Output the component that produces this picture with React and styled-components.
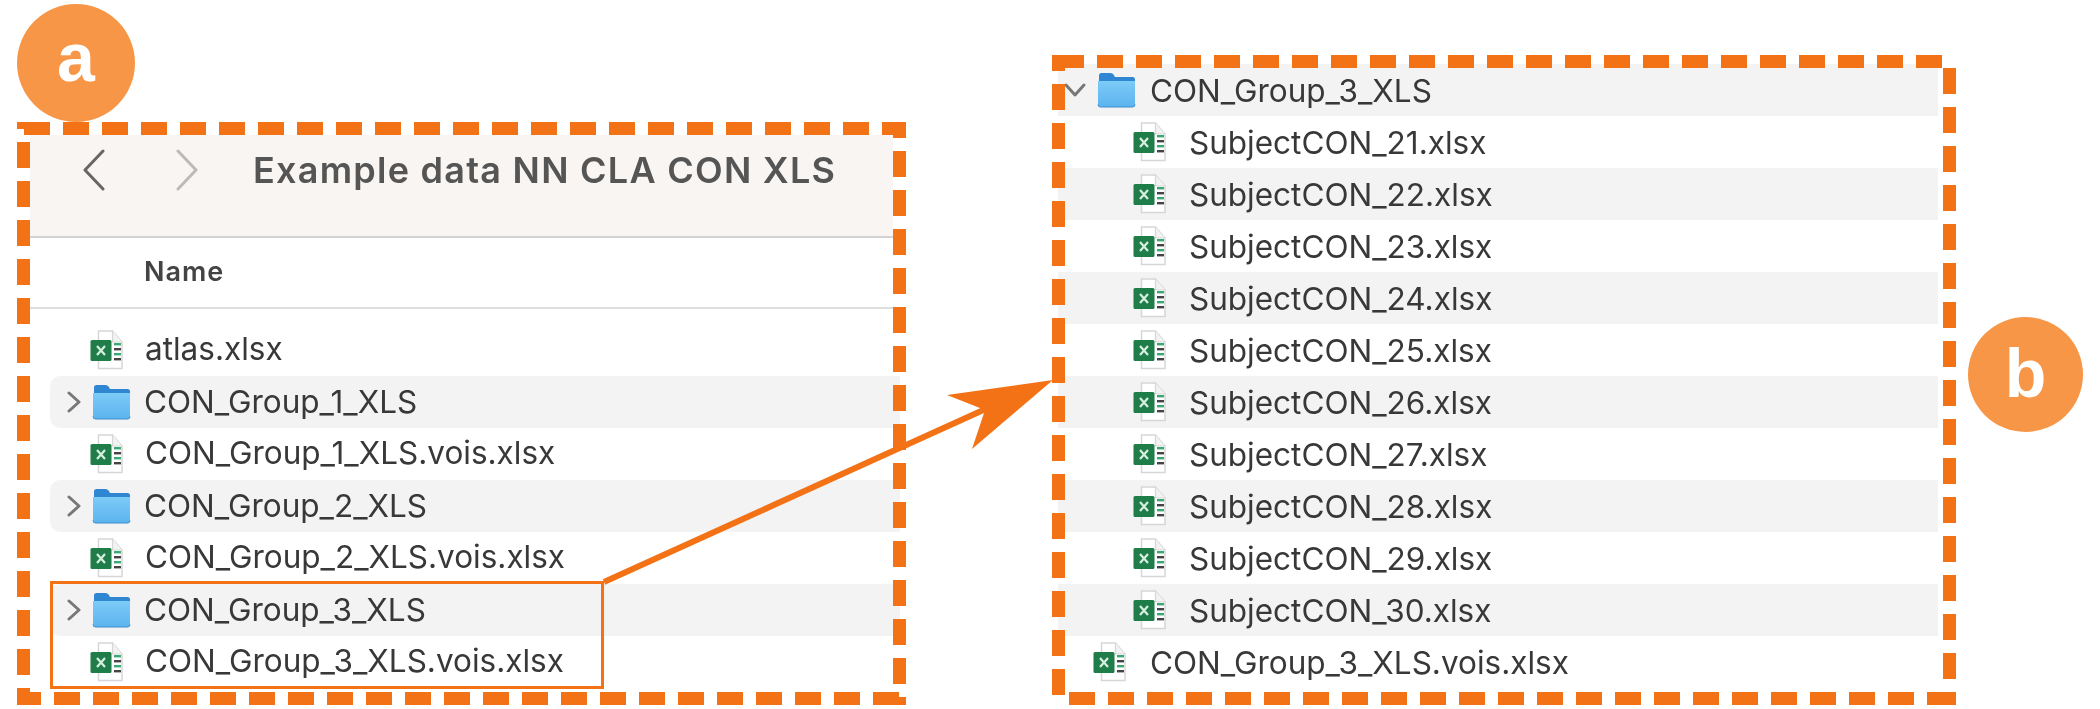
import React from "react";
import styled, { createGlobalStyle } from "styled-components";

const ORANGE = "#f47216";

const Global = createGlobalStyle`
  html, body { margin: 0; padding: 0; background: #fff; }
  body { font-family: "Inter", "Liberation Sans", sans-serif; }
`;

const Page = styled.div`
  position: relative;
  width: 2100px;
  height: 709px;
  overflow: hidden;
  display: flex;
  background: #fff;
`;

const LeftColumn = styled.section`
  margin-left: 17px;
  padding-top: 4px;
  width: 889px;
`;

const RightGroup = styled.section`
  margin-left: 146px;
  padding-top: 55px;
  display: flex;
  align-items: flex-start;
  gap: 12px;
`;

const Badge = styled.div`
  width: ${(p) => p.$size}px;
  height: ${(p) => p.$size}px;
  box-sizing: border-box;
  margin-top: ${(p) => p.$top || 0}px;
  padding-bottom: ${(p) => p.$lift}px;
  border-radius: 50%;
  background: #f79646;
  color: #fff;
  font-family: "Liberation Sans", sans-serif;
  font-weight: 700;
  font-size: 68px;
  display: flex;
  align-items: center;
  justify-content: center;
  filter: blur(0.3px);
`;

const DashedPanel = styled.div`
  position: relative;
  width: ${(p) => p.$width}px;
  height: ${(p) => p.$height}px;
  box-sizing: border-box;
  padding: ${(p) => p.$pad};
  &::after {
    content: "";
    position: absolute;
    inset: 0;
    pointer-events: none;
    background:
      ${(p) =>
        p.$trim
          ? "linear-gradient(#fff, #fff) 100% 0 / 1px 13px no-repeat, linear-gradient(#fff, #fff) 0 100% / 4px 10px no-repeat,"
          : ""}
      linear-gradient(90deg, ${ORANGE} 26px, transparent 0) ${(p) => p.$tx}px 0 / 39px 13px repeat-x,
      linear-gradient(90deg, ${ORANGE} 26px, transparent 0) ${(p) => p.$bx}px 100% / 39px 13px repeat-x,
      linear-gradient(180deg, ${ORANGE} 26px, transparent 0) 0 ${(p) => p.$ly}px / 13px 39px repeat-y,
      linear-gradient(180deg, ${ORANGE} 26px, transparent 0) 100% ${(p) => p.$ry}px / 13px 39px repeat-y;
  }
`;

const TitleBar = styled.header`
  height: 103px;
  box-sizing: border-box;
  margin-right: 7px;
  background: #f9f5f2;
  border-bottom: 2px solid #d5d3d1;
  display: flex;
  align-items: flex-start;
  padding: 14px 0 0 52px;
`;

const NavButton = styled.svg`
  width: 24px;
  height: 42px;
  margin-right: ${(p) => p.$gap}px;
  fill: none;
  stroke: ${(p) => p.$color};
  stroke-width: 3;
  stroke-linecap: round;
  stroke-linejoin: round;
`;

const Title = styled.h1`
  margin: 0;
  font-size: 36px;
  line-height: 42px;
  font-weight: 600;
  letter-spacing: 1.25px;
  color: #555;
  white-space: nowrap;
  filter: blur(0.6px);
`;

const ColumnHeader = styled.div`
  height: 71px;
  box-sizing: border-box;
  margin-right: 7px;
  border-bottom: 2px solid #dededd;
  padding-left: 114px;
  font-size: 27px;
  letter-spacing: 1px;
  line-height: 68px;
  font-weight: 600;
  color: #444;
  filter: blur(0.5px);
`;

const List = styled.div`
  padding-top: ${(p) => p.$top || 0}px;
`;

const Row = styled.div`
  height: 52px;
  box-sizing: border-box;
  display: flex;
  align-items: center;
  padding-left: ${(p) => p.$indent}px;
  margin-left: ${(p) => p.$inset || 0}px;
  background: ${(p) => (p.$shade ? "#f3f3f3" : "transparent")};
  border-radius: ${(p) => p.$radius || 0}px 0 0 ${(p) => p.$radius || 0}px;
`;

const Label = styled.span`
  font-size: 31.5px;
  color: #383838;
  white-space: nowrap;
  padding-bottom: ${(p) => p.$raise || 0}px;
  filter: blur(0.6px);
`;

const IconSlot = styled.svg`
  flex: none;
  width: ${(p) => p.$w}px;
  height: ${(p) => p.$h}px;
  margin-right: ${(p) => p.$gap}px;
  filter: blur(0.4px);
`;

const Twist = styled.svg`
  flex: none;
  width: ${(p) => p.$w}px;
  height: ${(p) => p.$h}px;
  margin-right: ${(p) => p.$gap}px;
  fill: none;
  stroke: #777;
  stroke-width: 3;
  stroke-linecap: round;
  stroke-linejoin: round;
`;

const Selection = styled.div`
  position: absolute;
  left: 33px;
  top: 459px;
  width: 554px;
  height: 108px;
  box-sizing: border-box;
  border: 3px solid ${ORANGE};
`;

const ArrowLayer = styled.svg`
  position: absolute;
  inset: 0;
  width: 2100px;
  height: 709px;
  pointer-events: none;
`;

const ExcelIcon = ({ gap }) => (
  <IconSlot $w={40} $h={40} $gap={gap} viewBox="0 0 40 40">
    <path d="M8.5 1h14l9.5 11v26.5h-23.500z" fill="#fff" stroke="#d6d6d6" strokeWidth="1.500" />
    <path d="M22.500 1v11h9.500" fill="#f2f2f2" stroke="#d6d6d6" strokeWidth="1.200" />
    <rect x="24" y="13" width="7" height="2.400" fill="#3aa873" />
    <rect x="24" y="18" width="7" height="2.400" fill="#444" />
    <rect x="24" y="23" width="7" height="2.400" fill="#3aa873" />
    <rect x="24" y="28" width="7" height="2.400" fill="#444" />
    <rect x="0.500" y="10" width="21" height="21" rx="1.500" fill="#1f7d4a" />
    <path d="M7 16l8 9M15 16l-8 9" stroke="#d8efe0" strokeWidth="2.200" />
  </IconSlot>
);

const FolderIcon = ({ gap }) => (
  <IconSlot $w={39} $h={36} $gap={gap} viewBox="0 0 39 36">
    <defs>
      <linearGradient id="folderBody" x1="0" x2="0" y1="0" y2="1">
        <stop offset="0" stopColor="#7ccbf8" />
        <stop offset="1" stopColor="#5cb3ee" />
      </linearGradient>
    </defs>
    <path d="M2 8V3.500Q2 1 4.500 1h9q2 0 3 1.500L18 5h17.500Q38 5 38 7.500V10H2z" fill="#2f86d2" />
    <path d="M1 9h37v23.500q0 2.500-2.500 2.500h-32Q1 35 1 32.500z" fill="url(#folderBody)" />
    <path d="M1 32.500q0 2.500 2.500 2.500h32q2.500 0 2.500-2.500" fill="none" stroke="#3d8fcf" strokeWidth="1" />
  </IconSlot>
);

const RightChevron = ({ gap }) => (
  <Twist $w={14} $h={22} $gap={gap} viewBox="0 0 14 22"><path d="M2 2l10 9-10 9" /></Twist>
);

const DownChevron = ({ gap }) => (
  <Twist $w={22} $h={14} $gap={gap} viewBox="0 0 22 14"><path d="M2 2l9 10 9-10" /></Twist>
);

const leftRows = [
  { name: "CON_Group_1_XLS", folder: true },
  { name: "CON_Group_1_XLS.vois.xlsx" },
  { name: "CON_Group_2_XLS", folder: true },
  { name: "CON_Group_2_XLS.vois.xlsx" },
  { name: "CON_Group_3_XLS", folder: true },
  { name: "CON_Group_3_XLS.vois.xlsx" },
];

const subjects = Array.from({ length: 10 }, (_, i) => `SubjectCON_${21 + i}.xlsx`);

export default function App() {
  return (
    <Page>
      <Global />
      <LeftColumn>
        <Badge $size={118} $lift={13}>a</Badge>
        <DashedPanel $width={889} $height={583} $pad="13px 6px 0 13px" $tx={7} $bx={-2} $ly={20} $ry={29}>
          <TitleBar>
            <NavButton $color="#666" $gap={69} viewBox="0 0 24 42"><path d="M21 2L3 21l18 19" /></NavButton>
            <NavButton $color="#bbb" $gap={54} viewBox="0 0 24 42"><path d="M3 2l18 19L3 40" /></NavButton>
            <Title>Example data NN CLA CON XLS</Title>
          </TitleBar>
          <ColumnHeader>Name</ColumnHeader>
          <List $top={15}>
            <Row $indent={60}>
              <ExcelIcon gap={15} />
              <Label $raise={4}>atlas.xlsx</Label>
            </Row>
            {leftRows.map((r) =>
              r.folder ? (
                <Row key={r.name} $shade $radius={10} $inset={20} $indent={17}>
                  <RightChevron gap={11} />
                  <FolderIcon gap={13} />
                  <Label $raise={2}>{r.name}</Label>
                </Row>
              ) : (
                <Row key={r.name} $indent={60}>
                  <ExcelIcon gap={15} />
                  <Label $raise={3}>{r.name}</Label>
                </Row>
              )
            )}
          </List>
          <Selection />
        </DashedPanel>
      </LeftColumn>
      <RightGroup>
        <DashedPanel $trim $width={904} $height={650} $pad="9px 18px 0 6px" $tx={6} $bx={17} $ly={29} $ry={13}>
          <Row $shade $indent={6}>
            <DownChevron gap={11} />
            <FolderIcon gap={14} />
            <Label>CON_Group_3_XLS</Label>
          </Row>
          {subjects.map((s, i) => (
            <Row key={s} $shade={i % 2 === 1} $indent={75}>
              <ExcelIcon gap={16} />
              <Label>{s}</Label>
            </Row>
          ))}
          <Row $indent={35}>
            <ExcelIcon gap={17} />
            <Label>CON_Group_3_XLS.vois.xlsx</Label>
          </Row>
        </DashedPanel>
        <Badge $size={115} $top={262} $lift={4}>b</Badge>
      </RightGroup>
      <ArrowLayer viewBox="0 0 2100 709">
        <line x1="604" y1="582" x2="990" y2="407" stroke={ORANGE} strokeWidth="6" />
        <polygon points="1053,380 947,395 985,410 972,449" fill={ORANGE} />
      </ArrowLayer>
    </Page>
  );
}
